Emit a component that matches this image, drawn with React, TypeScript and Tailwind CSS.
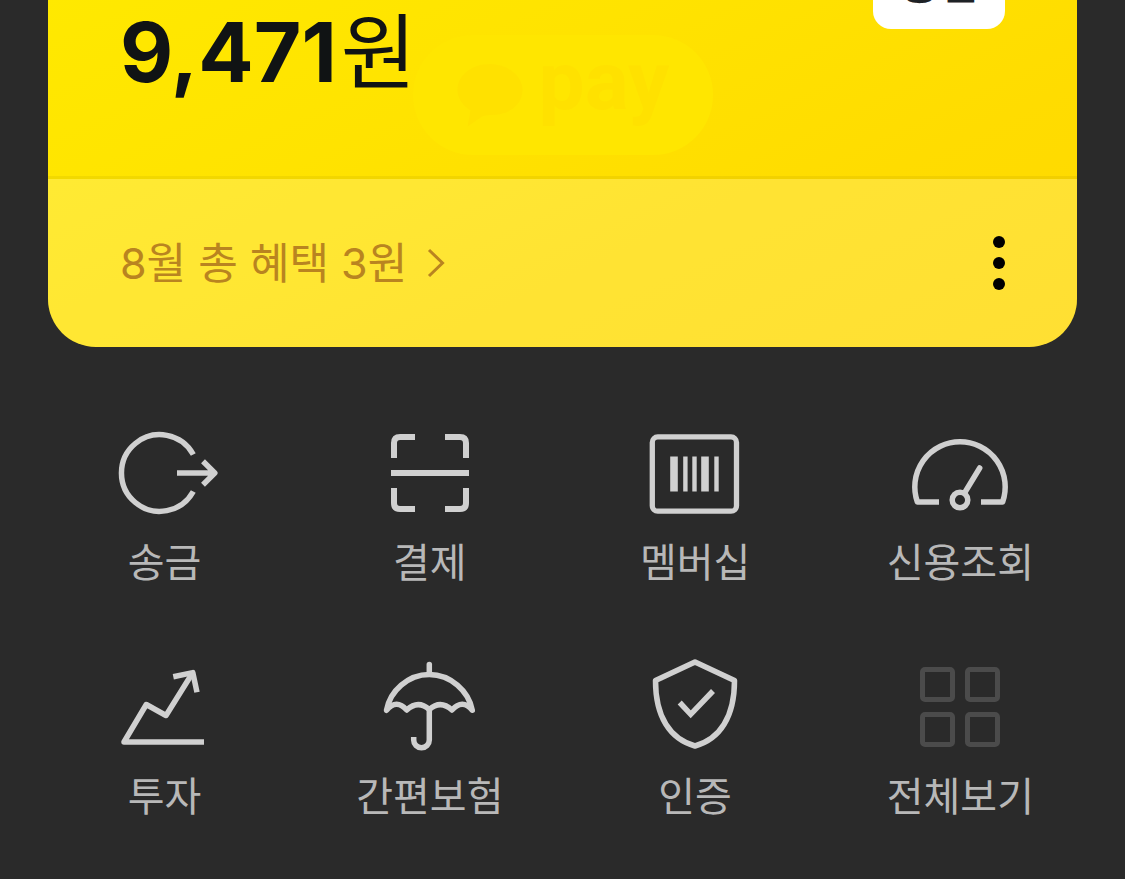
import type { ReactNode } from "react";

const stroke = {
  fill: "none",
  stroke: "currentColor",
  strokeWidth: 5.5,
  strokeLinejoin: "round" as const,
};

function Icon({ children }: { children: ReactNode }) {
  return (
    <svg viewBox="0 0 120 100" className="h-[100px] w-[120px]" aria-hidden="true" {...stroke}>
      {children}
    </svg>
  );
}

const services: { label: string; tone: string; icon: ReactNode }[] = [
  {
    label: "송금",
    tone: "text-[#d0d0d0]",
    icon: (
      <>
        <path d="M88.3 31.5A38.3 38.3 0 1 0 88.3 68.5" />
        <path d="M72 50H110M98 38.2L109.8 50L98 61.8" />
      </>
    ),
  },
  {
    label: "결제",
    tone: "text-[#d0d0d0]",
    icon: (
      <path
        strokeWidth={6}
        d="M24 35V20Q24 14 30 14H45M75 14H90Q96 14 96 20V35M96 65V80Q96 86 90 86H75M45 86H30Q24 86 24 80V65M21 50H99"
      />
    ),
  },
  {
    label: "멤버십",
    tone: "text-[#d0d0d0]",
    icon: (
      <>
        <rect x="17.3" y="13.9" width="84.2" height="74.3" rx="5.5" strokeWidth={5.3} />
        <path
          fill="currentColor"
          stroke="none"
          d="M35.2 33.5h7.6v35h-7.6zM48.2 33.5h4.4v35h-4.4zM57.3 33.5h4.4v35h-4.4zM66.2 33.5h7.6v35h-7.6zM79.3 33.5h4.4v35h-4.4z"
        />
      </>
    ),
  },
  {
    label: "신용조회",
    tone: "text-[#d0d0d0]",
    icon: (
      <>
        <path d="M39 79H17.4A45.2 45.2 0 1 1 102.6 79H81" />
        <circle cx="60" cy="77" r="7.8" />
        <path strokeLinecap="round" d="M64.5 70L79.7 45" />
      </>
    ),
  },
  {
    label: "투자",
    tone: "text-[#d0d0d0]",
    icon: (
      <>
        <path d="M99 85H19L41.3 47.5L61 58.5L87.5 16" />
        <path d="M68.3 19.7L87.8 15.6L92 35.3" />
      </>
    ),
  },
  {
    label: "간편보험",
    tone: "text-[#d0d0d0]",
    icon: (
      <>
        <path strokeLinecap="round" d="M59.3 7.5V17" />
        <path d="M16.5 53.3C20 34 38 17.5 59.3 17.5S98.6 34 102.3 53.3Q92.5 41.5 82 53Q70.5 42.5 59.3 52.5Q48 42.5 36.7 53Q26.5 41.5 16.5 53.3Z" />
        <path d="M59.3 52V83A7.8 7.8 0 0 1 43.7 83V80" />
      </>
    ),
  },
  {
    label: "인증",
    tone: "text-[#d0d0d0]",
    icon: (
      <>
        <path d="M60 5L99.5 23.5C99.5 60 85 82 60 89C35 82 20.5 60 20.5 23.5Z" />
        <path strokeLinejoin="miter" d="M44.7 45.5L55.7 57.3L78 34" />
      </>
    ),
  },
  {
    label: "전체보기",
    tone: "text-[#4b4b4b]",
    icon: (
      <g strokeWidth={5}>
        <rect x="22.5" y="12.5" width="30" height="30" rx="2.5" />
        <rect x="67.5" y="12.5" width="30" height="30" rx="2.5" />
        <rect x="22.5" y="57.5" width="30" height="30" rx="2.5" />
        <rect x="67.5" y="57.5" width="30" height="30" rx="2.5" />
      </g>
    ),
  },
];

function PayMark() {
  return (
    <div
      aria-hidden="true"
      className="absolute bottom-[21px] left-1/2 flex h-[120px] w-[300px] -translate-x-1/2 items-center rounded-full bg-[#ffe600] pl-[44px] text-[#ffe100]"
    >
      <svg viewBox="0 0 66 64" className="h-16 w-[66px]" fill="currentColor">
        <path d="M33 1C15 1 0.5 12 0.5 27C0.5 36 6 42.5 13.5 47.5L10.5 63.5L25 53.5Q29 51.5 35 52C53 52 65.5 41 65.5 27S51 1 33 1Z" />
      </svg>
      <span className="ml-4 pb-7 font-['Roboto',sans-serif] text-[82px] leading-[80px] font-bold">pay</span>
    </div>
  );
}

function BalanceCard() {
  return (
    <section className="mx-12 -mt-14 overflow-hidden rounded-b-[48px] bg-[linear-gradient(155deg,#ffea00_0%,#ffe300_38%,#ffdc00_70%,#ffd800_100%)]">
      <div className="relative flex h-[232px] items-start justify-between px-[72px]">
        <PayMark />
        <p className="relative flex items-baseline gap-1 pt-[51px] text-[82px] leading-[104px] font-bold text-[#101314]">
          9,471
          <span className="font-['Noto_Sans_CJK_KR',sans-serif] font-normal">원</span>
        </p>
        <button
          type="button"
          className="relative flex h-[85px] w-[132px] items-center justify-center rounded-[18px] bg-white pb-3 font-['Noto_Sans_CJK_KR',sans-serif] text-[42px] leading-[60px] font-bold text-[#1e2226]"
        >
          충전
        </button>
      </div>
      <div className="flex h-[171px] items-center justify-between border-t-[3px] border-black/5 bg-white/20 bg-clip-padding px-[72px]">
        <a href="#benefits" className="flex items-center gap-5 text-[43px] leading-[60px] text-[#b98420]">
          8월 총 혜택 3원
          <svg viewBox="0 0 18 30" className="h-[30px] w-[18px]" fill="none" stroke="currentColor" strokeWidth="3" aria-hidden="true">
            <path d="M2 2L15.5 15L2 28" />
          </svg>
        </a>
        <button type="button" aria-label="더보기" className="flex flex-col gap-[9px]">
          <span className="size-3 rounded-full bg-black" />
          <span className="size-3 rounded-full bg-black" />
          <span className="size-3 rounded-full bg-black" />
        </button>
      </div>
    </section>
  );
}

export default function App() {
  return (
    <main className="flow-root min-h-screen overflow-hidden bg-[#2a2a2a] font-['Inter','Noto_Sans_CJK_KR',sans-serif]">
      <BalanceCard />
      <nav className="mt-[76px] grid grid-cols-4 gap-y-[70px] px-8">
        {services.map(({ label, tone, icon }) => (
          <a key={label} href="#services" className="flex flex-col items-center gap-4">
            <span className={tone}>
              <Icon>{icon}</Icon>
            </span>
            <span className="text-[40px] leading-[48px] text-[#b8b8b8]">{label}</span>
          </a>
        ))}
      </nav>
    </main>
  );
}
